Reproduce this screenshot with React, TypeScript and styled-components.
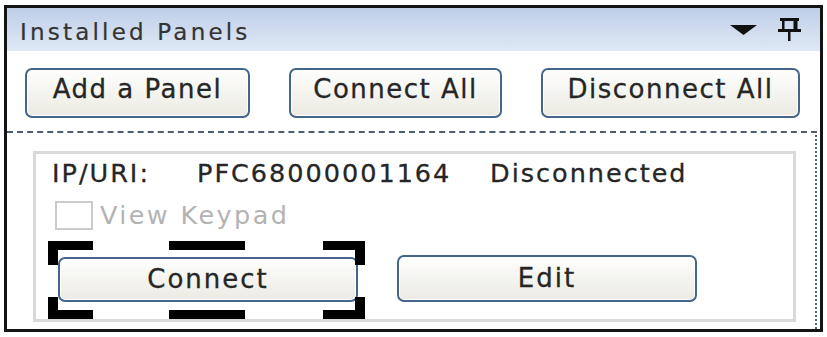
import styled, { createGlobalStyle } from "styled-components";

const GlobalStyle = createGlobalStyle`
  html, body {
    margin: 0;
    padding: 0;
    background: #ffffff;
  }
  body {
    font-family: "DejaVu Sans", Verdana, sans-serif;
    color: #262626;
  }
`;

const Frame = styled.div`
  box-sizing: border-box;
  margin: 5px 0 0 4px;
  width: 819px;
  height: 327px;
  border: 3px solid #141414;
  display: flex;
  flex-direction: column;
  background: #fff;
`;

const Header = styled.div`
  height: 43px;
  display: flex;
  align-items: center;
  justify-content: space-between;
  padding: 0 18px 0 13px;
  background: linear-gradient(#bfcfe9, #dfe8f4);
`;

const Title = styled.div`
  font-size: 23px;
  letter-spacing: 3.2px;
  color: #333;
  padding-top: 5px;
  -webkit-text-stroke: 0.2px #333;
`;

const HeaderIcons = styled.div`
  display: flex;
  align-items: center;
  gap: 20px;
`;

const Toolbar = styled.div`
  display: flex;
  gap: 39px;
  padding: 17px 0 0 18px;
`;

const ToolButton = styled.button<{ w: number }>`
  box-sizing: border-box;
  width: ${(p) => p.w}px;
  height: 50px;
  padding: 0 0 9px;
  border: 2px solid #45668a;
  border-radius: 7px;
  background: linear-gradient(#fefefd, #ebeae2);
  box-shadow: inset 0 0 0 1px #ffffff;
  font-family: "DejaVu Sans", Verdana, sans-serif;
  font-size: 26px;
  letter-spacing: 1.5px;
  color: #262626;
  -webkit-text-stroke: 0.3px #262626;
`;

const PanelList = styled.div`
  flex: 1;
  margin: 13px 3px 0 0;
  border-top: 2px dashed #4e5e72;
  border-right: 2px dotted #4e5e72;
  padding: 18px 19px 0 26px;
`;

const PanelCard = styled.div`
  height: 171px;
  box-sizing: border-box;
  border: 3px solid #d9d9d9;
  padding: 5px 16px 0;
  display: flex;
  flex-direction: column;
`;

const InfoRow = styled.div`
  display: grid;
  grid-template-columns: 145px 293px auto;
  font-size: 25.5px;
  line-height: 28px;
  letter-spacing: 2px;
  color: #262626;
  -webkit-text-stroke: 0.3px #262626;
`;

const CheckRow = styled.label`
  display: flex;
  align-items: center;
  gap: 7px;
  height: 30px;
  margin: 13px 0 0 3px;
`;

const CheckBox = styled.span`
  box-sizing: border-box;
  width: 38px;
  height: 29px;
  border: 2px solid #cbcbcb;
  background: #fff;
`;

const CheckLabel = styled.span`
  font-size: 25.5px;
  letter-spacing: 2.4px;
  color: #b3b3b3;
`;

const ActionRow = styled.div`
  display: flex;
  align-items: flex-end;
  gap: 39px;
  margin: 25px 0 0 6px;
`;

const FocusWrap = styled.div`
  position: relative;
  display: flex;
`;

const ActionButton = styled.button<{ h: number }>`
  box-sizing: border-box;
  width: 300px;
  height: ${(p) => p.h}px;
  padding: 0 0 2px;
  border: 2px solid #45668a;
  border-radius: 7px;
  background: linear-gradient(#fefefd, #ebeae2);
  box-shadow: inset 0 0 0 1px #ffffff;
  font-family: "DejaVu Sans", Verdana, sans-serif;
  font-size: 26px;
  letter-spacing: 2px;
  color: #262626;
  -webkit-text-stroke: 0.3px #262626;
`;

const FocusMarks = styled.svg`
  position: absolute;
  top: -16px;
  left: -10px;
  width: 317px;
  height: 78px;
  pointer-events: none;
`;

const marks = [
  [0, 0, 45, 9],
  [0, 0, 10, 24],
  [121, 0, 76, 9],
  [275, 0, 42, 9],
  [307, 0, 10, 24],
  [0, 56, 10, 22],
  [0, 69, 45, 9],
  [121, 69, 76, 9],
  [275, 69, 42, 9],
  [307, 56, 10, 22],
];

const App = () => {
  return (
    <>
      <GlobalStyle />
      <Frame>
        <Header>
          <Title>Installed Panels</Title>
          <HeaderIcons>
            <svg width="27" height="10" viewBox="0 0 27 10">
              <polygon points="0,0 27,0 13.5,10" fill="#111" />
            </svg>
            <svg width="25" height="23" viewBox="0 0 25 23">
              <rect x="3" y="0" width="19" height="3" fill="#111" />
              <rect x="5" y="0" width="2.5" height="13" fill="#111" />
              <rect x="16.5" y="0" width="4" height="13" fill="#111" />
              <rect x="1" y="11" width="23" height="3" fill="#111" />
              <rect x="11" y="13" width="2.5" height="10" fill="#111" />
            </svg>
          </HeaderIcons>
        </Header>
        <Toolbar>
          <ToolButton w={225}>Add a Panel</ToolButton>
          <ToolButton w={213}>Connect All</ToolButton>
          <ToolButton w={259}>Disconnect All</ToolButton>
        </Toolbar>
        <PanelList>
          <PanelCard>
            <InfoRow>
              <span>IP/URI:</span>
              <span>PFC68000001164</span>
              <span>Disconnected</span>
            </InfoRow>
            <CheckRow>
              <CheckBox />
              <CheckLabel>View Keypad</CheckLabel>
            </CheckRow>
            <ActionRow>
              <FocusWrap>
                <ActionButton h={45}>Connect</ActionButton>
                <FocusMarks viewBox="0 0 317 78">
                  {marks.map(([x, y, w, h], i) => (
                    <rect key={i} x={x} y={y} width={w} height={h} fill="#000" />
                  ))}
                </FocusMarks>
              </FocusWrap>
              <ActionButton h={47}>Edit</ActionButton>
            </ActionRow>
          </PanelCard>
        </PanelList>
      </Frame>
    </>
  );
};

export default App;
